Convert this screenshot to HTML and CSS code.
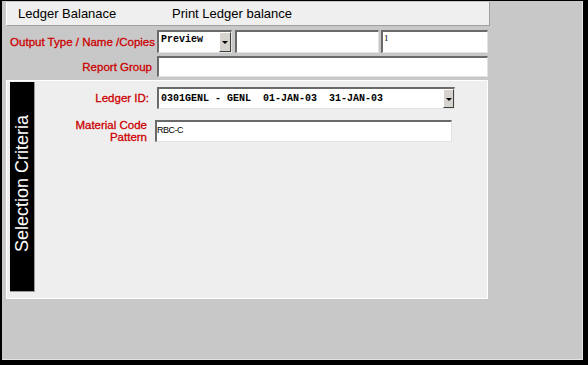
FILE: index.html
```html
<html>

<head>
    <meta charset="utf-8" />
    <title>Ledger Balanace</title>
    <link rel="stylesheet" href="styles.css">
</head>

<body>
    <div class="window">
        <div class="tabs">
            <span class="tab">Ledger Balanace</span>
            <span class="tab">Print Ledger balance</span>
        </div>
        <div class="params">
            <label class="lbl">Output Type / Name /Copies</label>
            <div class="row-fields">
                <div class="combo combo-type">
                    <span class="combo-text">Preview</span>
                    <span class="combo-btn"></span>
                </div>
                <div class="field field-name"></div>
                <div class="field field-copies">1</div>
            </div>
            <label class="lbl lbl-group">Report Group</label>
            <div class="field field-group"></div>
        </div>
        <div class="criteria">
            <div class="criteria-tab"><span>Selection Criteria</span></div>
            <div class="criteria-form">
                <label class="lbl">Ledger ID:</label>
                <div class="combo combo-ledger">
                    <span class="combo-text">0301GENL - GENL  01-JAN-03  31-JAN-03</span>
                    <span class="combo-btn"></span>
                </div>
                <label class="lbl lbl-pattern">Material Code<br>Pattern</label>
                <div class="field field-pattern">RBC-C</div>
            </div>
        </div>
    </div>
</body>

</html>
```

FILE: styles.css
```css
* {
    box-sizing: border-box;
}

html,
body {
    font-family: "Liberation Sans", Arial, sans-serif;
    margin: 0;
    padding: 0;
}

body {
    width: 588px;
    height: 365px;
    overflow: hidden;
}

.window {
    height: 365px;
    background: #c8c8c8;
    border-style: solid;
    border-color: #000;
    border-width: 1px 5px 5px 2px;
    box-shadow: inset -1px -1px 0 #e2e2e2;
}

/* tab strip */
.tabs {
    display: flex;
    align-items: center;
    width: 484px;
    height: 24px;
    margin: 1px 0 0 4px;
    background: #efefef;
    border-left: 1px solid #fff;
    border-right: 1px solid #a0a0a0;
    border-bottom: 1px solid #a0a0a0;
    font-size: 13px;
    color: #000;
}

.tab {
    width: 154px;
}

.tab:first-child {
    margin-left: 11px;
}

/* labels */
.lbl {
    color: #cc0000;
    -webkit-text-stroke: 0.3px #cc0000;
    font-size: 11.5px;
    text-align: right;
    align-self: center;
    white-space: nowrap;
}

.lbl-group {
    padding-right: 3px;
}

.lbl-pattern {
    line-height: 12px;
    padding-right: 2px;
}

/* inputs */
.field,
.combo {
    background: #fff;
    border-top: 2px solid #6a6a6a;
    border-left: 2px solid #6a6a6a;
    border-right: 1px solid #e2e2e2;
    border-bottom: 1px solid #e2e2e2;
}

.combo {
    display: flex;
}

.combo-text {
    flex: 1;
    font-family: "Liberation Mono", "Courier New", monospace;
    font-weight: bold;
    font-size: 10px;
    white-space: pre;
    padding: 2px 0 0 2px;
}

.combo-btn {
    position: relative;
    width: 12px;
    background: #d6d3ce;
    border-top: 1px solid #fff;
    border-left: 1px solid #fff;
    border-right: 1px solid #404040;
    border-bottom: 1px solid #404040;
}

.combo-btn::after {
    content: "";
    position: absolute;
    left: 2px;
    top: 50%;
    margin-top: -1px;
    border-left: 3px solid transparent;
    border-right: 3px solid transparent;
    border-top: 3px solid #000;
}

/* parameter rows */
.params {
    display: grid;
    grid-template-columns: 153px 331px;
    grid-template-rows: 23px 21px;
    column-gap: 2px;
    row-gap: 3px;
    margin-top: 4px;
}

.row-fields {
    display: flex;
}

.combo-type {
    width: 75px;
}

.field-name {
    width: 144px;
    margin-left: 3px;
}

.field-copies {
    width: 107px;
    margin-left: 2px;
    font-family: "Liberation Serif", serif;
    font-size: 9px;
    padding: 1px 0 0 1px;
}

/* selection criteria panel */
.criteria {
    display: flex;
    width: 482px;
    height: 219px;
    margin: 3px 0 0 4px;
    padding: 1px 0 0 3px;
    background: #eeeeee;
    border: 1px solid #fff;
}

.criteria-tab {
    display: flex;
    align-items: center;
    justify-content: center;
    width: 25px;
    height: 210px;
    background: #000;
    border-right: 1px solid #9a9a9a;
    border-bottom: 1px solid #9a9a9a;
}

.criteria-tab span {
    writing-mode: vertical-rl;
    transform: rotate(180deg);
    color: #fff;
    font-size: 18px;
    white-space: nowrap;
    margin-bottom: 6px;
}

.criteria-form {
    display: grid;
    grid-template-columns: 114px 298px;
    grid-template-rows: 22px 22px;
    column-gap: 8px;
    row-gap: 11px;
    align-content: start;
    padding-top: 5px;
}

.combo-ledger .combo-text {
    padding-top: 4px;
}

.combo-ledger .combo-btn {
    width: 11px;
}

.field-pattern {
    width: 297px;
    margin-left: -2px;
    font-size: 9px;
    letter-spacing: -0.5px;
    padding: 3px 0 0 0;
}
```
